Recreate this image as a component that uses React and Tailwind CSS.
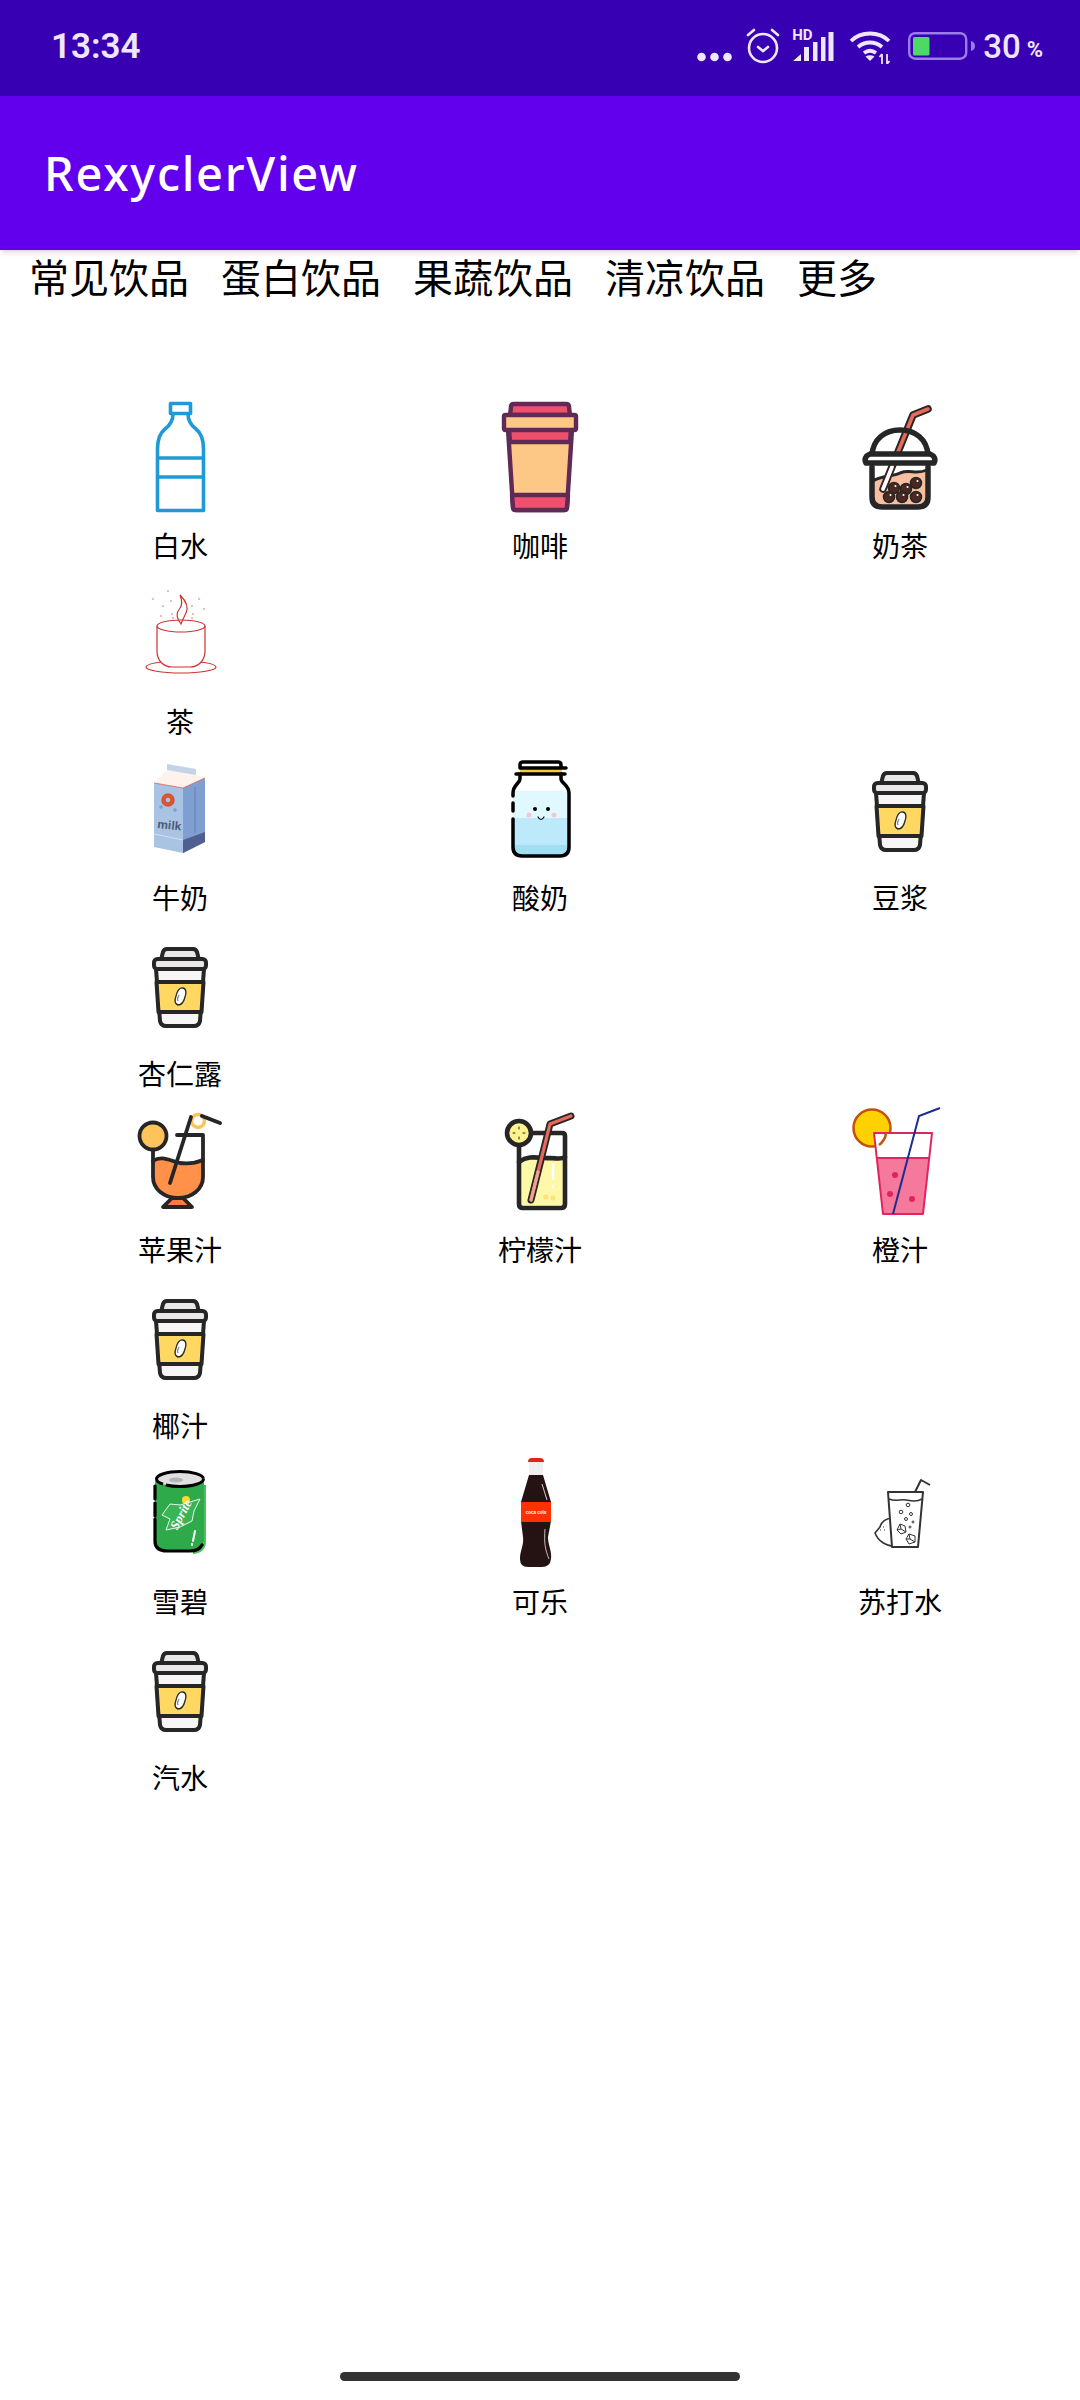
import React from "react";

const DARK = "#262626";

const Bottle = () => (
  <svg width="120" height="120" viewBox="0 0 120 120" fill="none" stroke="#1f9ad6" strokeWidth="3.600" strokeLinejoin="round">
    <rect x="50.5" y="6.500" width="20" height="10" />
    <path d="M53 17C53 25 49 29 45 32C40 36 37.500 43 37.500 52V113.500H83.500V52C83.500 43 81 36 76 32C72 29 68 25 68 17" />
    <path d="M37.500 61H83.500M37.500 80H83.500" />
  </svg>
);

const Coffee = () => (
  <svg width="120" height="120" viewBox="0 0 120 120" stroke="#5f2a55" strokeWidth="4.400" strokeLinejoin="round">
    <path d="M30 18L31 10Q31 7 34 7H86Q89 7 89 10L90 18Z" fill="#f0506e" />
    <path d="M28 32L33 110Q33 113 36 113H84Q87 113 87 110L92 32Z" fill="#fdc886" />
    <path d="M29 32H91L90 45H30Z" fill="#f0506e" />
    <path d="M32 98H88L87 110Q87 113 84 113H36Q33 113 33 110Z" fill="#f0506e" />
    <rect x="24" y="18" width="72" height="15" rx="1.500" fill="#fdc886" />
  </svg>
);

const Boba = () => (
  <svg width="120" height="120" viewBox="0 0 120 120" fill="none" strokeLinecap="round" strokeLinejoin="round">
    <path d="M32 68V100Q32 110 42 110H78Q88 110 88 100V68Z" fill="#fff" />
    <path d="M33 84C42 78 52 80 60 76C70 72 76 78 87 73V100Q87 109 78 109H42Q33 109 33 100Z" fill="#f7bfa0" />
    <path d="M33 84C42 78 52 80 60 76C70 72 76 78 87 73" stroke={DARK} strokeWidth="3" />
    {[[54, 91], [66, 92], [76, 86], [49, 100], [62, 100], [76, 100]].map(([x, y]) => (
      <g key={x + "-" + y}>
        <circle cx={x} cy={y} r="5.500" fill="#4a2a20" stroke={DARK} strokeWidth="1.500" />
        <circle cx={x + 1.500} cy={y - 2} r="1" fill="#fff" />
      </g>
    ))}
    <path d="M43 92L73 18L88 12" stroke={DARK} strokeWidth="7.500" />
    <path d="M43 92L73 18L88 12" stroke="#e8685a" strokeWidth="3.600" />
    <path d="M43 92L52 70" stroke="#fff" strokeWidth="3.600" />
    <path d="M32 58C33 42 45 33 60 33C75 33 87 42 88 58" stroke={DARK} strokeWidth="5.500" />
    <path d="M30 57H90Q97 60 94 66H26Q23 60 30 57Z" fill="#fff" stroke={DARK} strokeWidth="5.500" />
    <path d="M32 70V100Q32 110 42 110H78Q88 110 88 100V70" stroke={DARK} strokeWidth="5.500" />
  </svg>
);

const Tea = () => (
  <svg width="120" height="120" viewBox="0 0 120 120" fill="none" stroke="#c8352f" strokeWidth="1.200">
    <ellipse cx="61" cy="94" rx="35" ry="6" />
    <path d="M37 53V78C37 88 44 94 52 94H70C78 94 85 88 85 78V53" fill="#fff" />
    <ellipse cx="61" cy="53" rx="24" ry="6" fill="#fff" />
    <path d="M61 51C56 44 56 40 60 35C63 31 62 27 60 22C66 28 69 34 66 40C64 44 63 46 61 51Z" />
    {[[33, 26], [48, 18], [43, 33], [51, 28], [41, 43], [52, 41], [53, 45], [73, 41], [72, 45], [79, 26], [84, 36], [72, 33]].map(([x, y]) => (
      <circle key={x + "-" + y} cx={x} cy={y} r="0.300" fill="#c8352f" strokeWidth="0.700" />
    ))}
  </svg>
);

const Milk = () => (
  <svg width="120" height="120" viewBox="0 0 120 120">
    <path d="M47 15L76 20V28L47 23Z" fill="#c4d4e8" />
    <path d="M34 34L47 21L76 26L85 29L63 39Z" fill="#fdf3ec" />
    <path d="M34 34L63 39V104L34 98Z" fill="#a9c3e3" />
    <path d="M63 39L85 29V93L63 104Z" fill="#7f9fd2" />
    <path d="M63 91L85 83V93L63 104Z" fill="#4f5f8f" />
    <path d="M34 34L63 39L85 29" fill="none" stroke="#d9605a" strokeWidth="0.800" />
    <path d="M34 85L63 91" stroke="#dbe6f3" strokeWidth="0.800" />
    <path d="M75 38V84" stroke="#5c78a8" strokeWidth="0.800" />
    <circle cx="48" cy="51" r="4.500" fill="none" stroke="#d9553a" strokeWidth="4.500" />
    <circle cx="41" cy="58" r="1.800" fill="#7f9fd2" />
    <circle cx="55" cy="61" r="1.800" fill="#7f9fd2" />
    <text x="37" y="79" fontFamily="Liberation Sans, sans-serif" fontWeight="700" fontSize="12" fill="#4a5a7a" textLength="24" lengthAdjust="spacingAndGlyphs" transform="rotate(6 37 79)">milk</text>
  </svg>
);

const Yogurt = () => (
  <svg width="120" height="120" viewBox="0 0 120 120" fill="none" strokeLinecap="round" strokeLinejoin="round">
    <path d="M33 42H89V99Q89 106 82 106H40Q33 106 33 99Z" fill="#bdeafb" />
    <path d="M33 42H89V69H33Z" fill="#e0f8ff" />
    <path d="M33 96H89V99Q89 106 82 106H40Q33 106 33 99Z" fill="#a0dff2" />
    <path d="M40 18H82V24H40Z" fill="#f6c944" />
    <path d="M40 19V16Q40 13 43 13H78Q81 13 81 16V19M42 19H86M36 25H85" stroke="#000" strokeWidth="3.500" />
    <path d="M40 25V30C40 34 33 36 33 44V47M33 54V62M33 70V98Q33 107 42 107H80Q89 107 89 98V44C89 36 81 34 81 30V25" stroke="#000" strokeWidth="3.500" />
    <circle cx="55" cy="60" r="2" fill="#000" />
    <circle cx="68" cy="60" r="2" fill="#000" />
    <circle cx="49" cy="66" r="2.500" fill="#f7c4d0" />
    <circle cx="74" cy="66" r="2.500" fill="#f7c4d0" />
    <path d="M58 68Q61 73 64 68" stroke="#000" strokeWidth="1.200" />
  </svg>
);

const SoyCup = () => (
  <svg width="120" height="120" viewBox="0 0 120 120" stroke={DARK} strokeWidth="4" strokeLinejoin="round">
    <path d="M41 35L43 27Q44 24 47 24H73Q76 24 77 27L79 35Z" fill="#e8e8e8" />
    <path d="M36 44L40 96Q41 101 46 101H74Q79 101 80 96L84 44Z" fill="#f7f5f6" />
    <rect x="34" y="34" width="52" height="10" rx="3.500" fill="#e8e8e8" />
    <path d="M36.500 57H83.500L81.500 87H38.500Z" fill="#ffd862" />
    <path d="M63 63C67 64 66 69 65 72C64 76 62 80 58 80C54 79 55 74 56 71C57 67 59 62 63 63Z" fill="#fff" strokeWidth="1.300" />
    <path d="M58 76C57 74 58 72 59 70" fill="none" strokeWidth="0.800" />
  </svg>
);

const AppleJuice = () => (
  <svg width="120" height="120" viewBox="0 0 120 120" fill="none" stroke={DARK} strokeWidth="3.800" strokeLinecap="round" strokeLinejoin="round">
    <circle cx="33" cy="35" r="13.500" fill="#ffc35c" />
    <path d="M33 60C42 54 50 60 60 62C68 63 76 62 83 59V76C83 88 72 95 62 97C46 97 33 88 33 76Z" fill="#ff9148" stroke="none" />
    <path d="M33 49V76C33 88 44 97 58 97C72 97 83 88 83 76V34H57" />
    <path d="M33 60C42 54 50 60 60 62C68 63 76 62 83 59" />
    <path d="M52 97L43 106H72L63 97Z" fill="#ff7a45" />
    <circle cx="78" cy="20" r="6.500" fill="#fff" stroke="#ffc35c" strokeWidth="3.500" />
    <path d="M50 82L71 16" />
    <path d="M82 15L100 22" strokeWidth="4" />
  </svg>
);

const LemonJuice = () => (
  <svg width="120" height="120" viewBox="0 0 120 120" fill="none" strokeLinecap="round" strokeLinejoin="round">
    <path d="M40 60C50 53 60 58 70 57C75 57 80 58 83 56V104H40Z" fill="#fdf7a8" />
    <path d="M73 63V78M73 85V86" stroke="#fff" strokeWidth="2.500" />
    <circle cx="66" cy="96" r="2.500" fill="#fde27c" />
    <circle cx="73" cy="97" r="2.500" fill="#fde27c" />
    <path d="M39 44V103Q39 107 43 107H81Q85 107 85 103V35Q85 32 82 32H50" stroke={DARK} strokeWidth="4.600" />
    <path d="M39 61C50 53 60 58 70 57C76 57 81 59 85 56" stroke={DARK} strokeWidth="4.600" />
    <circle cx="39" cy="32" r="12" fill="#fdf28e" stroke={DARK} strokeWidth="4.600" />
    <path d="M39 26V28M39 36V38M33 32H35M43 32H45" stroke={DARK} strokeWidth="1" />
    <path d="M51 99L70 23L91 15" stroke={DARK} strokeWidth="7" />
    <path d="M51 99L70 23L91 15" stroke="#e8685a" strokeWidth="3.200" />
    <path d="M51 99L58 71" stroke="#f0a090" strokeWidth="3.200" />
  </svg>
);

const OrangeJuice = () => (
  <svg width="120" height="120" viewBox="0 0 120 120" fill="none">
    <circle cx="32" cy="27" r="18.500" fill="#ffd100" stroke="#c4500a" strokeWidth="2.500" />
    <path d="M34 32H91L89 57H37Z" fill="#fff" />
    <path d="M37 57H89L83 113H43Z" fill="#f4799b" />
    <path d="M46 33A18.500 18.500 0 0 1 39 44" stroke="#c4500a" strokeWidth="2.500" />
    <path d="M34 32H92L83 113H43ZM37 57H89" stroke="#e0245e" strokeWidth="2" strokeLinejoin="round" />
    <circle cx="55" cy="74" r="3" fill="#e0245e" />
    <circle cx="50" cy="93" r="3" fill="#e0245e" />
    <circle cx="72" cy="98" r="3" fill="#e0245e" />
    <path d="M53 113L79 15L100 7" stroke="#1f2b8f" strokeWidth="2" />
  </svg>
);

const SpriteCan = () => (
  <svg width="120" height="120" viewBox="0 0 120 120" fill="none">
    <path d="M35 30Q35 22 60 21Q84 22 84 30V88Q84 99 72 99H48Q35 99 35 88Z" fill="#2eaa4a" />
    <path d="M85 32V88Q85 99 73 100" stroke="#46c45a" strokeWidth="2" />
    <path d="M35 33V46M35 50V63M35 66V88Q35 98 47 98H70Q79 98 82 92" stroke="#000" strokeWidth="3.200" strokeLinecap="round" />
    <ellipse cx="60" cy="26" rx="23.500" ry="7.500" fill="#e0e0e0" stroke="#000" strokeWidth="3" strokeDasharray="40 3 60 3" />
    <ellipse cx="56" cy="27" rx="7" ry="2.500" fill="#b5b5b5" />
    <circle cx="66" cy="47" r="4" fill="#ffd92e" />
    <path d="M50 51L60 52L70 49L80 46L74 58L72 68L60 74L46 77L50 66L42 62Z" fill="#39b457" stroke="#eef8ee" strokeWidth="1" strokeLinejoin="round" />
    <text x="62" y="65" fontFamily="Liberation Serif, serif" fontStyle="italic" fontWeight="700" fontSize="13" fill="#ffffff" textAnchor="middle" transform="rotate(-62 62 62)">Sprite</text>
    <path d="M75 78L73 88M72 91V92" stroke="#fff" strokeWidth="2" strokeLinecap="round" />
  </svg>
);

const Cola = () => (
  <svg width="120" height="120" viewBox="0 0 120 120" fill="none">
    <path d="M49 9H63V24H49Z" fill="#eeeeee" />
    <path d="M48 9Q48 5 52 5H60Q64 5 64 9Z" fill="#e0241a" />
    <path d="M49 22H63L71 49V68L68 84C68 92 72 98 71 106Q70 114 62 114H48Q40 114 40 106C40 98 44 92 43 84L41 68V49Z" fill="#251313" />
    <rect x="41" y="49" width="30" height="20" fill="#ff3100" />
    <text x="56" y="60.500" fontFamily="Liberation Sans, sans-serif" fontWeight="700" fontSize="4.500" fill="#fff" textAnchor="middle">coca cola</text>
    <path d="M62 31L67 47" stroke="#fff" strokeWidth="0.800" />
    <path d="M65 76C64 90 65 96 69 106" stroke="#e8e8e8" strokeWidth="0.800" />
  </svg>
);

const Soda = () => (
  <svg width="120" height="120" viewBox="0 0 120 120" fill="none" stroke="#333" strokeWidth="1.600" strokeLinejoin="round">
    <path d="M75 39L81 27L90 32" strokeWidth="2" />
    <path d="M52 65C44 66 41 70 40 74L35 80C38 88 46 93 54 93" strokeWidth="1.600" />
    <path d="M40 77H41M43 74H44M44 77H45" strokeWidth="1" />
    <path d="M48 39H83L78 94H52Z" fill="#fff" strokeWidth="2" />
    <path d="M49 46C56 49 60 46 66 47C72 48 76 49 82 46" />
    <circle cx="68" cy="52" r="1.800" strokeWidth="1" />
    <circle cx="61" cy="59" r="1.800" strokeWidth="1" />
    <circle cx="71" cy="61" r="1.500" strokeWidth="1" />
    <circle cx="66" cy="66" r="1.500" strokeWidth="1" />
    <circle cx="73" cy="69" r="1" strokeWidth="1" />
    <circle cx="70" cy="74" r="1" strokeWidth="1" />
    <path d="M60 71L65 73L66 79L61 81L57 77ZM60 71L61 76L66 79M61 76L57 77" strokeWidth="1" />
    <path d="M69 81L75 83L75 89L69 91L66 86ZM69 81L70 86L75 89M70 86L66 86" strokeWidth="1" />
  </svg>
);

const sections = [
  [
    { name: "白水", icon: <Bottle /> },
    { name: "咖啡", icon: <Coffee /> },
    { name: "奶茶", icon: <Boba /> },
    { name: "茶", icon: <Tea /> },
  ],
  [
    { name: "牛奶", icon: <Milk /> },
    { name: "酸奶", icon: <Yogurt /> },
    { name: "豆浆", icon: <SoyCup /> },
    { name: "杏仁露", icon: <SoyCup /> },
  ],
  [
    { name: "苹果汁", icon: <AppleJuice /> },
    { name: "柠檬汁", icon: <LemonJuice /> },
    { name: "橙汁", icon: <OrangeJuice /> },
    { name: "椰汁", icon: <SoyCup /> },
  ],
  [
    { name: "雪碧", icon: <SpriteCan /> },
    { name: "可乐", icon: <Cola /> },
    { name: "苏打水", icon: <Soda /> },
    { name: "汽水", icon: <SoyCup /> },
  ],
];

const tabs = ["常见饮品", "蛋白饮品", "果蔬饮品", "清凉饮品", "更多"];

const StatusIcons = () => (
  <div className="flex items-center text-[#efe6ff]">
    {/* 三个点 */}
    <svg width="35" height="10" viewBox="0 0 35 10" fill="currentColor" className="mt-[20px]">
      <circle cx="4.500" cy="5" r="4.300" />
      <circle cx="17.500" cy="5" r="4.300" />
      <circle cx="30.500" cy="5" r="4.300" />
    </svg>
    {/* 闹钟 */}
    <svg width="36" height="36" viewBox="0 0 36 36" fill="none" stroke="currentColor" strokeWidth="2.600" strokeLinecap="round" className="ml-[13px] mt-[-2px]">
      <circle cx="18" cy="20" r="14" />
      <path d="M13 19L18 23L23 19" />
      <path d="M3 7L9 2M33 7L27 2" />
    </svg>
    {/* 信号 */}
    <div className="relative ml-[12px] h-[30px] w-[41px] mt-[-1px]">
      <span className="absolute left-[-1px] top-[-5px] font-['Roboto',sans-serif] text-[15px] leading-[16px] font-bold">HD</span>
      <svg width="41" height="30" viewBox="0 0 41 30" fill="currentColor">
        <path d="M0 29L8 22V29ZM11 15H16V29H11ZM20 10H24.500V29H20ZM28 5H32.500V29H28ZM35.500 0H40.500V29H35.500Z" />
      </svg>
    </div>
    {/* wifi */}
    <svg width="44" height="34" viewBox="0 0 44 34" fill="none" stroke="currentColor" strokeWidth="3.800" className="ml-[15px]">
      <path d="M2 11C12 1 30 1 40 11M9 17C16 11 26 11 33 17M15 23C19 20 23 20 27 23" />
      <path d="M21 31L16.500 26.500Q21 24 25.500 26.500Z" fill="currentColor" stroke="none" />
      <path d="M33 24V34M30.500 27L33 24M38 24V34M40.500 31L38 34" strokeWidth="1.800" />
    </svg>
    {/* 电池 */}
    <svg width="68" height="30" viewBox="0 0 68 30" className="ml-[15px]">
      <rect x="1.200" y="1.200" width="57" height="25.500" rx="6" fill="none" stroke="#9a7de8" strokeWidth="2.400" />
      <rect x="5" y="5" width="16.500" height="18.500" rx="1.500" fill="#4cd964" />
      <path d="M63 9Q67 10 67 14Q67 18 63 19Z" fill="#9a7de8" />
    </svg>
    <span className="ml-[7px] font-['Roboto',sans-serif] text-[33px] leading-[40px] font-medium">30</span>
    <span className="ml-[6px] mt-[5px] font-['Roboto',sans-serif] text-[22px] leading-[28px] font-bold">%</span>
  </div>
);

export default function App() {
  return (
    <div className="flex min-h-[2400px] flex-col bg-white font-['Noto_Sans_CJK_SC',sans-serif] text-black">
      {/* 状态栏 */}
      <div className="flex h-[96px] items-center justify-between bg-[#3700B3] pr-[37px] pl-[51px] pb-[2px]">
        <span className="font-['Roboto',sans-serif] text-[35px] leading-[44px] font-semibold text-[#efe6ff]">13:34</span>
        <StatusIcons />
      </div>

      {/* 标题栏 */}
      <div className="flex h-[154px] items-center bg-[#6200EE] pl-[44px] shadow-md">
        <h1 className="font-['Noto_Sans',sans-serif] text-[47px] leading-[56px] font-medium tracking-[1.7px] text-white">RexyclerView</h1>
      </div>

      {/* 分类 */}
      <div className="flex gap-[32px] pt-[2px] pl-[29px]">
        {tabs.map((tab) => (
          <span key={tab} className="text-[40px] leading-[48px]">{tab}</span>
        ))}
      </div>

      {/* 饮品列表 */}
      <div className="mt-[97px]">
        {sections.map((items, i) => (
          <div key={i} className="grid grid-cols-3">
            {items.map((item) => (
              <div key={item.name} className="flex h-[176px] flex-col items-center">
                {item.icon}
                <span className="mt-[10px] text-[28px] leading-[36px]">{item.name}</span>
              </div>
            ))}
          </div>
        ))}
      </div>

      {/* 底部横条 */}
      <div className="mt-auto flex justify-center pb-[19px]">
        <div className="h-[9px] w-[400px] rounded-full bg-[#333333]" />
      </div>
    </div>
  );
}
